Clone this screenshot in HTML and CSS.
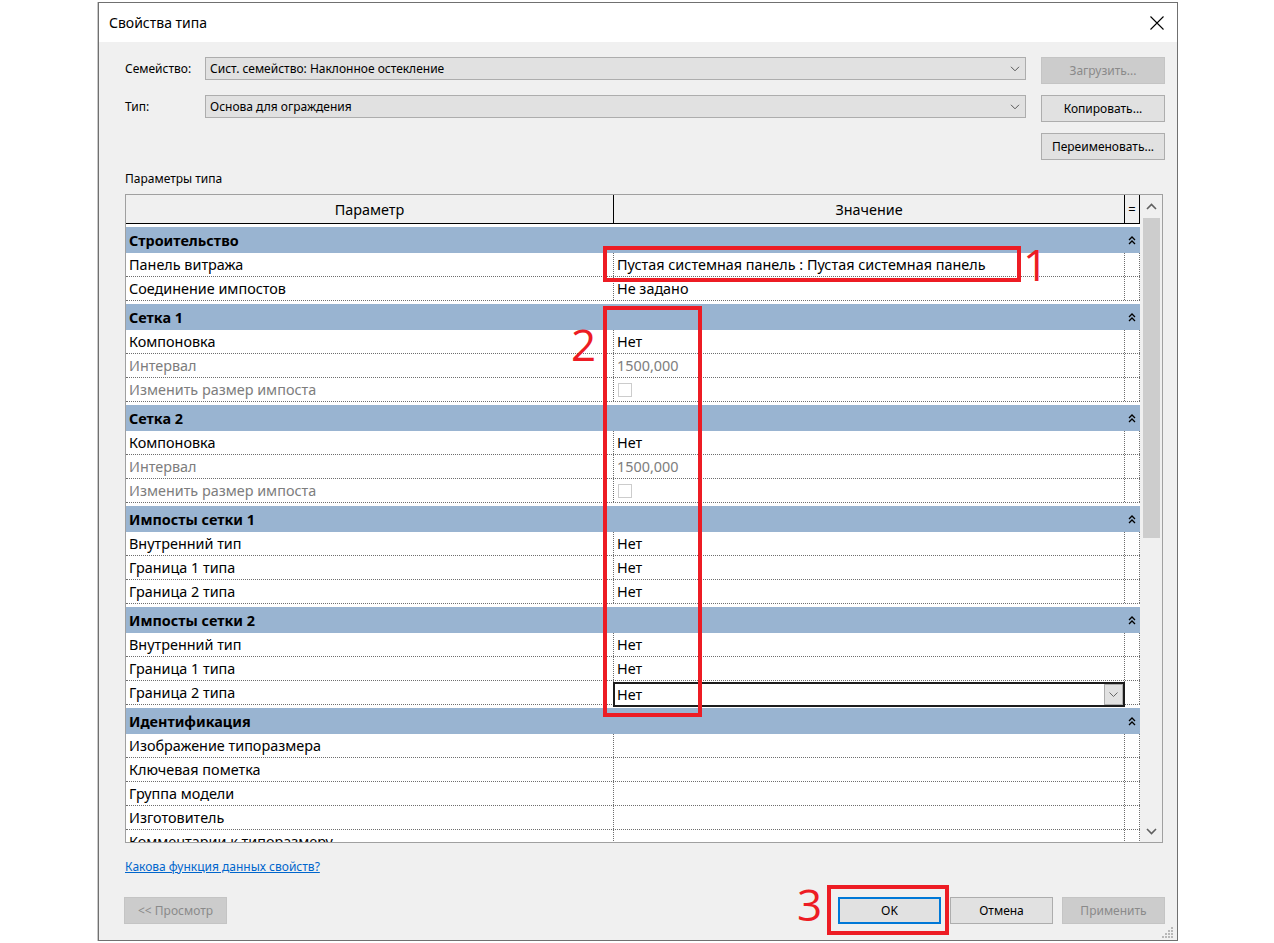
FILE: index.html
```html
<!DOCTYPE html>
<html lang="ru">
<head>
<meta charset="utf-8">
<title>Свойства типа</title>
<link rel="stylesheet" href="styles.css">
</head>
<body>
<div class="dialog">
  <div class="titlebar">
    <span class="title">Свойства типа</span>
    <svg class="close" width="16" height="16" viewBox="0 0 16 16"><path d="M1.5 1.5 L14.5 14.5 M14.5 1.5 L1.5 14.5" stroke="#000" stroke-width="1.1" fill="none"/></svg>
  </div>
  <div class="content">
    <div class="top-grid">
      <div class="lbl">Семейство:</div>
      <div class="combo"><span>Сист. семейство: Наклонное остекление</span><svg width="10" height="6" viewBox="0 0 10 6"><path d="M1 0.8 L5 4.8 L9 0.8" stroke="#555" stroke-width="1" fill="none"/></svg></div>
      <div class="btn disabled">Загрузить...</div>
      <div class="lbl">Тип:</div>
      <div class="combo"><span>Основа для ограждения</span><svg width="10" height="6" viewBox="0 0 10 6"><path d="M1 0.8 L5 4.8 L9 0.8" stroke="#555" stroke-width="1" fill="none"/></svg></div>
      <div class="btn">Копировать...</div>
      <div></div>
      <div></div>
      <div class="btn">Переименовать...</div>
    </div>
    <div class="section-label">Параметры типа</div>
    <div class="table">
      <div class="grid">
        <div class="thead">
          <div class="th">Параметр</div>
          <div class="th">Значение</div>
          <div class="th eq">=</div>
        </div>
        <div class="tbody">
          <div class="group"><span>Строительство</span><svg class="collapse" width="8" height="10" viewBox="0 0 8 10"><path d="M1 5 L4 2 L7 5 M1 9 L4 6 L7 9" stroke="#000" stroke-width="1.3" fill="none"/></svg></div>
          <div class="row"><div class="c1">Панель витража</div><div class="c2">Пустая системная панель : Пустая системная панель</div><div class="c3"></div></div>
          <div class="row"><div class="c1">Соединение импостов</div><div class="c2">Не задано</div><div class="c3"></div></div>

          <div class="group"><span>Сетка 1</span><svg class="collapse" width="8" height="10" viewBox="0 0 8 10"><path d="M1 5 L4 2 L7 5 M1 9 L4 6 L7 9" stroke="#000" stroke-width="1.3" fill="none"/></svg></div>
          <div class="row"><div class="c1">Компоновка</div><div class="c2">Нет</div><div class="c3"></div></div>
          <div class="row dis"><div class="c1">Интервал</div><div class="c2">1500,000</div><div class="c3"></div></div>
          <div class="row dis"><div class="c1">Изменить размер импоста</div><div class="c2"><span class="check"></span></div><div class="c3"></div></div>

          <div class="group"><span>Сетка 2</span><svg class="collapse" width="8" height="10" viewBox="0 0 8 10"><path d="M1 5 L4 2 L7 5 M1 9 L4 6 L7 9" stroke="#000" stroke-width="1.3" fill="none"/></svg></div>
          <div class="row"><div class="c1">Компоновка</div><div class="c2">Нет</div><div class="c3"></div></div>
          <div class="row dis"><div class="c1">Интервал</div><div class="c2">1500,000</div><div class="c3"></div></div>
          <div class="row dis"><div class="c1">Изменить размер импоста</div><div class="c2"><span class="check"></span></div><div class="c3"></div></div>

          <div class="group"><span>Импосты сетки 1</span><svg class="collapse" width="8" height="10" viewBox="0 0 8 10"><path d="M1 5 L4 2 L7 5 M1 9 L4 6 L7 9" stroke="#000" stroke-width="1.3" fill="none"/></svg></div>
          <div class="row"><div class="c1">Внутренний тип</div><div class="c2">Нет</div><div class="c3"></div></div>
          <div class="row"><div class="c1">Граница 1 типа</div><div class="c2">Нет</div><div class="c3"></div></div>
          <div class="row"><div class="c1">Граница 2 типа</div><div class="c2">Нет</div><div class="c3"></div></div>

          <div class="group"><span>Импосты сетки 2</span><svg class="collapse" width="8" height="10" viewBox="0 0 8 10"><path d="M1 5 L4 2 L7 5 M1 9 L4 6 L7 9" stroke="#000" stroke-width="1.3" fill="none"/></svg></div>
          <div class="row"><div class="c1">Внутренний тип</div><div class="c2">Нет</div><div class="c3"></div></div>
          <div class="row"><div class="c1">Граница 1 типа</div><div class="c2">Нет</div><div class="c3"></div></div>
          <div class="row"><div class="c1">Граница 2 типа</div><div class="c2 editing"><div class="editor"><span>Нет</span><span class="dd"><svg width="9" height="5" viewBox="0 0 9 5"><path d="M0.5 0.5 L4.5 4.5 L8.5 0.5" stroke="#666" stroke-width="1" fill="none"/></svg></span></div></div><div class="c3"></div></div>

          <div class="group"><span>Идентификация</span><svg class="collapse" width="8" height="10" viewBox="0 0 8 10"><path d="M1 5 L4 2 L7 5 M1 9 L4 6 L7 9" stroke="#000" stroke-width="1.3" fill="none"/></svg></div>
          <div class="row"><div class="c1">Изображение типоразмера</div><div class="c2"></div><div class="c3"></div></div>
          <div class="row"><div class="c1">Ключевая пометка</div><div class="c2"></div><div class="c3"></div></div>
          <div class="row"><div class="c1">Группа модели</div><div class="c2"></div><div class="c3"></div></div>
          <div class="row"><div class="c1">Изготовитель</div><div class="c2"></div><div class="c3"></div></div>
          <div class="row"><div class="c1">Комментарии к типоразмеру</div><div class="c2"></div><div class="c3"></div></div>
        </div>
      </div>
      <div class="scrollbar">
        <div class="sb-btn"><svg width="11" height="7" viewBox="0 0 11 7"><path d="M1 6 L5.5 1.5 L10 6" stroke="#606060" stroke-width="1.6" fill="none"/></svg></div>
        <div class="track"><div class="thumb"></div></div>
        <div class="sb-btn"><svg width="11" height="7" viewBox="0 0 11 7"><path d="M1 1 L5.5 5.5 L10 1" stroke="#606060" stroke-width="1.6" fill="none"/></svg></div>
      </div>
    </div>
    <a class="help" href="#">Какова функция данных свойств?</a>
    <div class="buttons">
      <div class="btn disabled wide">&lt;&lt; Просмотр</div>
      <div class="btn-group">
        <div class="btn wide default">OK</div>
        <div class="btn wide">Отмена</div>
        <div class="btn wide disabled">Применить</div>
      </div>
    </div>
  </div>
  <svg class="grip" width="12" height="12" viewBox="0 0 12 12"><g fill="#b8b8b8"><rect x="9" y="1" width="2" height="2"/><rect x="6" y="4" width="2" height="2"/><rect x="9" y="4" width="2" height="2"/><rect x="3" y="7" width="2" height="2"/><rect x="6" y="7" width="2" height="2"/><rect x="9" y="7" width="2" height="2"/><rect x="0" y="10" width="2" height="2"/><rect x="3" y="10" width="2" height="2"/><rect x="6" y="10" width="2" height="2"/><rect x="9" y="10" width="2" height="2"/></g></svg>
</div>

<div class="mark m1"></div>
<div class="mark m2"></div>
<div class="mark m3"></div>
<span class="num n1">1</span>
<span class="num n2">2</span>
<span class="num n3">3</span>
</body>
</html>
```

FILE: styles.css
```css
* { box-sizing: border-box; }
html, body { margin: 0; padding: 0; }
body {
  background: #ffffff;
  font-family: "Noto Sans", "Open Sans", sans-serif;
  width: 1274px;
  height: 943px;
  overflow: hidden;
  position: relative;
  color: #000;
}

.dialog {
  position: relative;
  margin: 2px 0 0 98px;
  width: 1080px;
  height: 939px;
  border: 1px solid #707070;
  box-shadow: -1px 0 0 #c9c9c9;
  background: #f0f0f0;
  display: flex;
  flex-direction: column;
}

.titlebar {
  height: 39px;
  background: #ffffff;
  display: flex;
  align-items: center;
  justify-content: space-between;
  padding: 0 12px 0 10px;
  flex: none;
}
.title { font-size: 14px; }
.close { display: block; }

.content {
  padding: 15px 12px 0 26px;
  display: flex;
  flex-direction: column;
  flex: 1;
}

.top-grid {
  display: grid;
  grid-template-columns: 80px 821px 139px;
  grid-auto-rows: 27px;
  row-gap: 11px;
  align-items: start;
}
.top-grid .btn { margin-left: 15px; }
.lbl { font-size: 12px; line-height: 23px; }
.combo {
  height: 23px;
  border: 1px solid #adadad;
  background: #e1e1e1;
  display: flex;
  align-items: center;
  justify-content: space-between;
  padding: 0 5px 0 4px;
  font-size: 12px;
}
.combo svg { display: block; }

.btn {
  height: 27px;
  border: 1px solid #adadad;
  background: #e1e1e1;
  font-size: 12px;
  display: flex;
  align-items: center;
  justify-content: center;
  color: #000;
}
.btn.disabled { background: #cccccc; border-color: #c4c4c4; color: #8a8a8a; }
.btn.wide { width: 103px; }
.btn.default { border: 2px solid #0078d7; }

.section-label { font-size: 12px; line-height: 16px; margin-top: 11px; }

.table {
  margin-top: 7px;
  width: 1038px;
  height: 649px;
  border: 1px solid #a0a0a0;
  background: #ffffff;
  display: flex;
}
.grid { width: 1014px; display: flex; flex-direction: column; overflow: hidden; }

.thead {
  display: grid;
  grid-template-columns: 488px 511px 15px;
  height: 29px;
  background: #f0f0f0;
  border-bottom: 1px solid #000;
  flex: none;
}
.th {
  border-right: 1px solid #000;
  font-size: 14.4px;
  display: flex;
  align-items: center;
  justify-content: center;
}
.th.eq { font-size: 13px; }

.tbody { flex: 1; overflow: hidden; }

.group {
  margin-top: 3px;
  height: 26px;
  background: #99b4d1;
  font-size: 14.4px;
  font-weight: bold;
  display: flex;
  align-items: center;
  justify-content: space-between;
  padding: 0 4px 0 3px;
}
.collapse { display: block; }

.row {
  display: grid;
  grid-template-columns: 488px 511px 15px;
  height: 24px;
  border-bottom: 1px dotted #6e6e6e;
  font-size: 14.4px;
}
.row > div {
  border-right: 1px dotted #6e6e6e;
  display: flex;
  align-items: center;
  padding-left: 3px;
  white-space: nowrap;
  overflow: hidden;
}
.row.dis { color: #7d7d7d; }
.check {
  width: 14px;
  height: 14px;
  border: 1px solid #cccccc;
  background: #fff;
  margin-left: 1px;
}
.row > .c2.editing { padding: 0; overflow: visible; position: relative; }
.editor {
  position: absolute;
  left: -1px;
  right: -1px;
  top: 1px;
  height: 25px;
  border: 2px solid #1c1c1c;
  background: #fff;
  display: flex;
  align-items: center;
  justify-content: space-between;
  padding-left: 2px;
}
.dd {
  width: 19px;
  height: 21px;
  background: #e1e1e1;
  border: 1px solid #adadad;
  display: flex;
  align-items: center;
  justify-content: center;
}
.dd svg { display: block; }

.scrollbar {
  width: 22px;
  background: #f0f0f0;
  display: flex;
  flex-direction: column;
  height: 647px;
}
.sb-btn { height: 22px; display: flex; align-items: center; justify-content: center; flex: none; }
.sb-btn svg { display: block; }
.track { flex: 1; padding: 1px 2px 0 3px; }
.thumb { height: 320px; background: #cdcdcd; }

.help {
  margin-top: 16px;
  font-size: 12px;
  line-height: 16px;
  color: #0066cc;
  text-decoration: underline;
  align-self: flex-start;
}

.buttons {
  margin-top: 22px;
  margin-left: -1px;
  display: flex;
  justify-content: space-between;
}
.btn-group { display: flex; gap: 9px; }

.grip { position: absolute; right: 3px; bottom: 2px; }

.mark { position: absolute; border: 4px solid #ed1c24; }
.m1 { left: 603px; top: 246px; width: 418px; height: 36px; }
.m2 { left: 603px; top: 306px; width: 99px; height: 411px; }
.m3 { left: 827px; top: 885px; width: 122px; height: 50px; }

.num {
  position: absolute;
  font-family: "Open Sans", "Noto Sans", sans-serif;
  font-size: 44px;
  line-height: 44px;
  color: #ed1c24;
}
.n1 { left: 1023px; top: 242px; }
.n2 { left: 571px; top: 322px; }
.n3 { left: 797px; top: 882px; }
```
